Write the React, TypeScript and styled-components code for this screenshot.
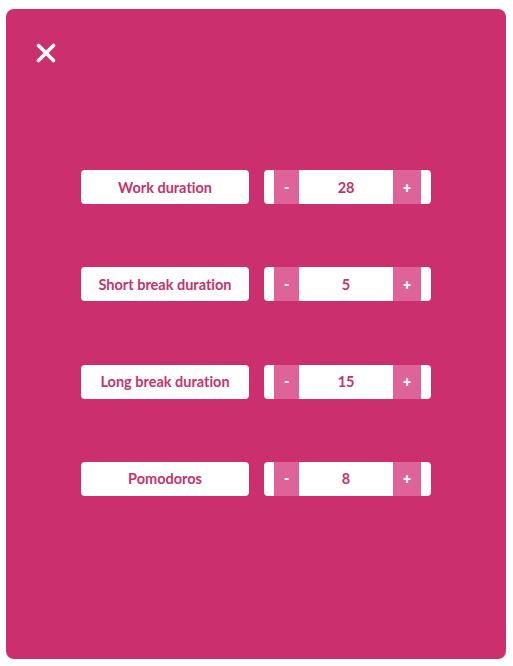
import React, { useState } from "react";
import styled, { createGlobalStyle } from "styled-components";

const Global = createGlobalStyle`
  html, body { margin: 0; padding: 0; background: #ffffff; }
  body { font-family: Lato, "Open Sans", sans-serif; }
  * { box-sizing: border-box; }
`;

const Panel = styled.div`
  position: relative;
  margin: 9px 7px 0 6px;
  width: 500px;
  height: 650px;
  background: #cc2f6d;
  border-radius: 8px;
  display: flex;
  flex-direction: column;
  align-items: center;
  justify-content: center;
`;

const CloseButton = styled.button`
  position: absolute;
  left: 22px;
  top: 26px;
  width: 36px;
  height: 36px;
  padding: 0;
  border: none;
  background: transparent;
  cursor: pointer;
  display: flex;
  align-items: center;
  justify-content: center;
`;

const Rows = styled.div`
  display: flex;
  flex-direction: column;
  gap: 63.3px;
  margin-bottom: 2px;
`;

const Row = styled.div`
  display: flex;
  gap: 15px;
  align-items: center;
`;

const Label = styled.div`
  width: 168px;
  height: 34px;
  background: #ffffff;
  border-radius: 4px;
  display: flex;
  align-items: center;
  justify-content: center;
  font-family: Lato, sans-serif;
  font-weight: 700;
  font-size: 14.5px;
  font-variant-ligatures: none;
  color: #c8326b;
`;

const Stepper = styled.div`
  width: 167px;
  height: 34px;
  background: #ffffff;
  border-radius: 4px;
  display: flex;
  align-items: stretch;
  padding: 0 10px;
`;

const StepButton = styled.button`
  border: none;
  margin: 0;
  padding: 0 10px;
  background: #de6398;
  color: #ffffff;
  font-family: Lato, sans-serif;
  font-weight: 800;
  font-size: 14px;
  cursor: pointer;
`;

const Value = styled.div`
  flex: 1;
  display: flex;
  align-items: center;
  justify-content: center;
  font-family: Lato, sans-serif;
  font-weight: 700;
  font-size: 14.5px;
  color: #c8326b;
`;

const items = [
  { label: "Work duration", value: 28 },
  { label: "Short break duration", value: 5 },
  { label: "Long break duration", value: 15 },
  { label: "Pomodoros", value: 8 },
];

export default function App() {
  const [values, setValues] = useState(items.map((i) => i.value));
  const change = (idx: number, d: number) =>
    setValues((v) => v.map((x, i) => (i === idx ? Math.max(1, x + d) : x)));
  return (
    <>
      <Global />
      <Panel>
        <CloseButton aria-label="Close">
          <svg width="20" height="20" viewBox="0 0 20 20">
            <path d="M2.5 2.5 L17.5 17.5 M17.5 2.5 L2.5 17.5" stroke="#ffffff" strokeWidth="3.6" strokeLinecap="round" />
          </svg>
        </CloseButton>
        <Rows>
          {items.map((it, idx) => (
            <Row key={it.label}>
              <Label>{it.label}</Label>
              <Stepper>
                <StepButton onClick={() => change(idx, -1)}>-</StepButton>
                <Value>{values[idx]}</Value>
                <StepButton onClick={() => change(idx, 1)}>+</StepButton>
              </Stepper>
            </Row>
          ))}
        </Rows>
      </Panel>
    </>
  );
}
